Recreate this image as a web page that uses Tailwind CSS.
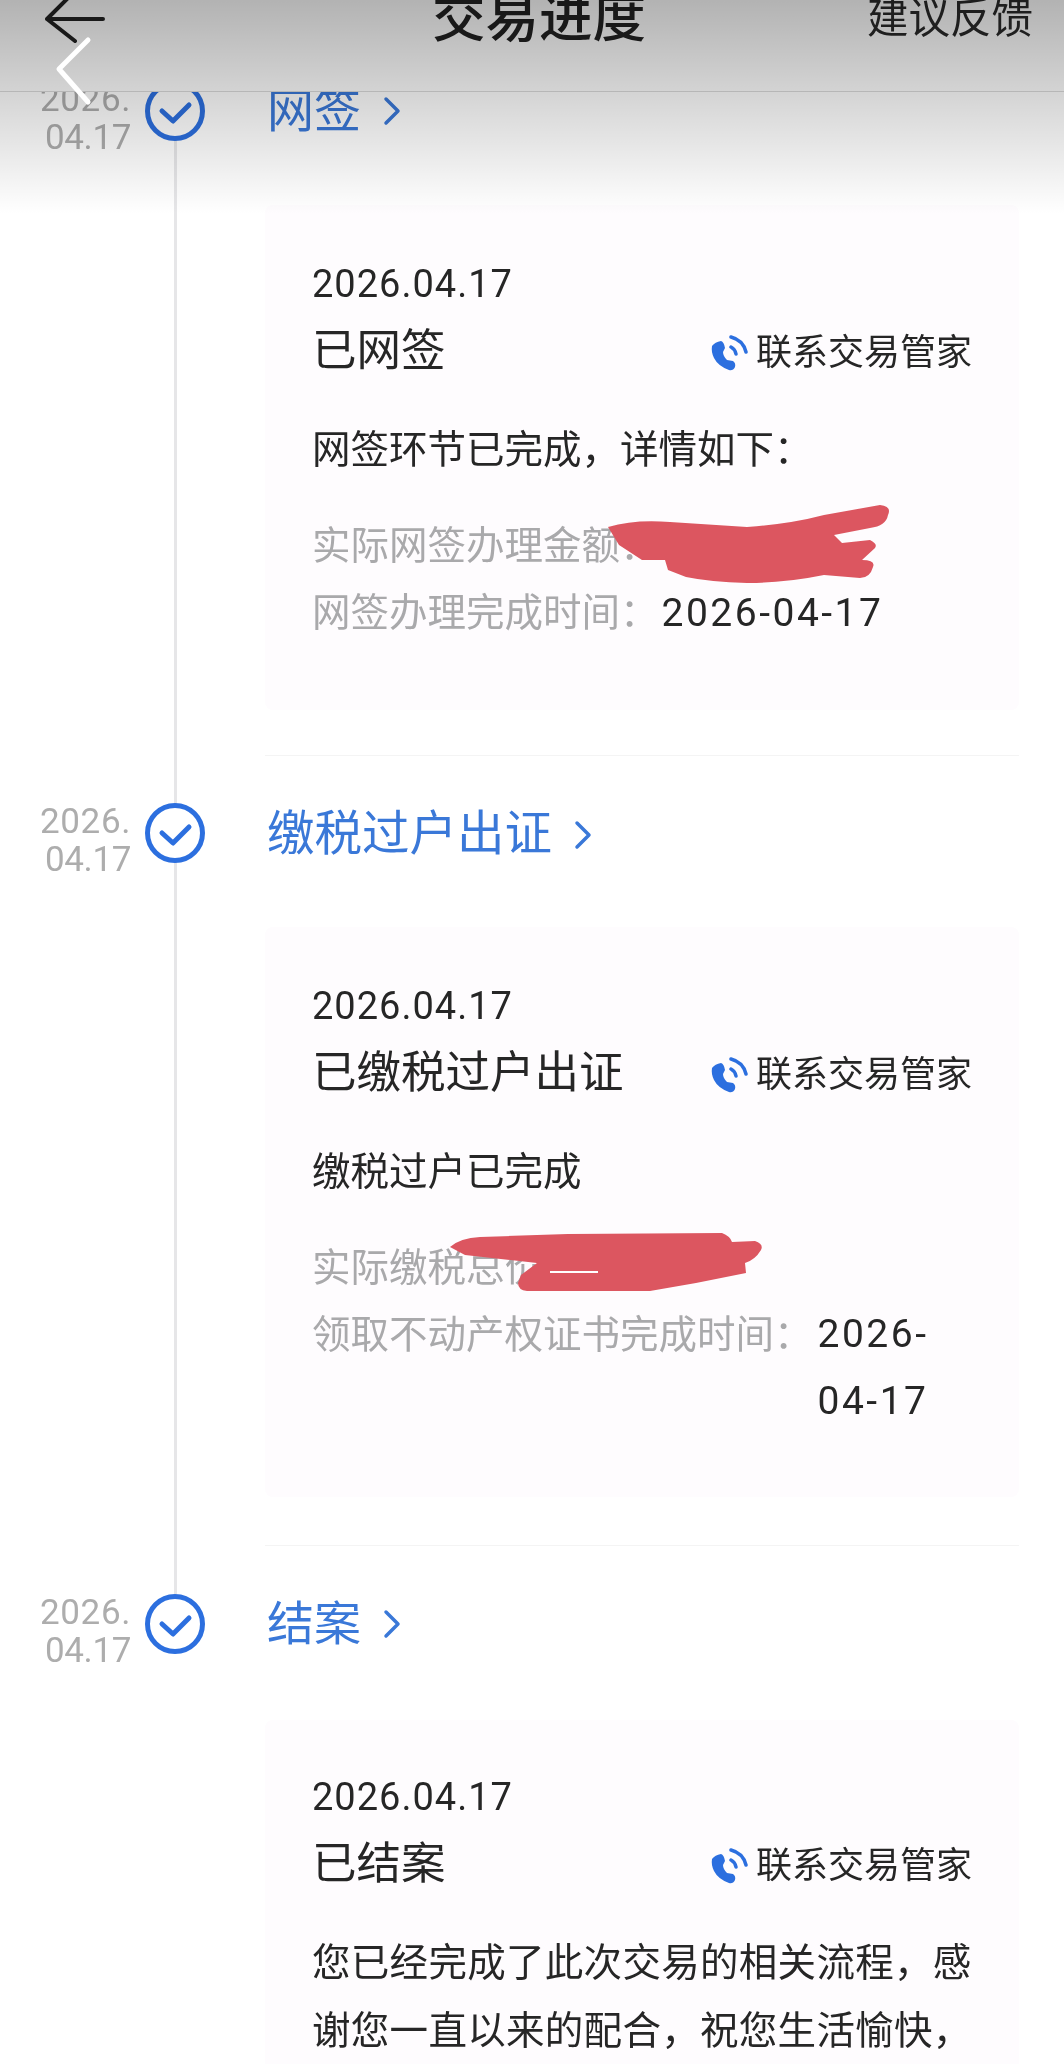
<!DOCTYPE html>
<html lang="zh-CN">
<head>
    <meta charset="UTF-8">
    <title>交易进度</title>
    <script src="https://cdn.jsdelivr.net/npm/@tailwindcss/browser@4"></script>
</head>
<body class="bg-white">
<div class="relative h-[2064px] w-[1064px] overflow-hidden bg-white pt-[81px] font-['Roboto','Noto_Sans_CJK_SC',sans-serif] text-[#262626] blur-[0.4px]">

    <!-- Timeline rail -->
    <div class="absolute left-[174px] top-[92px] h-[1502px] w-[3px] bg-[#e6e6e8]"></div>

    <!-- Step: 网签 -->
    <section class="relative">
        <div class="flex h-[60px] items-center">
            <div class="mt-[16px] w-[131px] text-right text-[35px] leading-[38px] text-[#adadad]"><span class="tracking-[0.6px]">2026.</span><br><span class="tracking-[-0.4px]">04.17</span></div>
            <svg class="ml-[14px] h-[60px] w-[60px]" viewBox="0 0 60 60" fill="#fff" stroke="#2c6fdf" stroke-width="5" stroke-linecap="round" stroke-linejoin="round"><circle cx="30" cy="30" r="27.5"/><path d="M17 30l11 10 16-16" fill="none"/></svg>
            <span class="ml-[62px] text-[47px] text-[#3a78d8]">网签</span>
            <svg class="ml-[22px] h-[30px] w-[18px]" viewBox="0 0 18 30" fill="none" stroke="#3a78d8" stroke-width="3.5" stroke-linecap="round" stroke-linejoin="round"><path d="M3 3l12 12L3 27"/></svg>
        </div>
        <div class="ml-[265px] mt-[64px] h-[505px] w-[754px] rounded-lg bg-[#fefcfe] px-[47px] pt-[57px]">
            <p class="text-[38px] leading-[44px] tracking-[1px]">2026.04.17</p>
            <div class="mt-[12px] flex h-[66px] items-center justify-between">
                <span class="text-[44.5px]">已网签</span>
                <span class="mt-[3px] flex items-center text-[36px]">
                    <svg class="mr-[8px] h-[38px] w-[38px]" viewBox="0 0 38 38"><path fill="#2c6fdf" d="M2 12Q5 8 11 7Q14 8 15 14L13 18Q13 22 17 26L23 27Q26 29 25 33Q23 37 19 36Q8 32 4 24Q1 18 2 12Z"/><path fill="none" stroke="#2c6fdf" stroke-width="3.5" stroke-linecap="round" d="M21 3Q33 6 36 18M21 13Q25 15 26 20"/></svg>
                    联系交易管家
                </span>
            </div>
            <p class="mt-[32px] text-[38.5px] leading-[67px]">网签环节已完成，详情如下：</p>
            <div class="mt-[29px] text-[38.5px] leading-[67px] text-[#a9a9ab]">
                <p>实际网签办理金额：</p>
                <p>网签办理完成时间：<span class="ml-[3px] text-[39px] tracking-[2.5px] text-[#262626]">2026-04-17</span></p>
            </div>
        </div>
        <div class="ml-[265px] mt-[45px] h-px w-[754px] bg-[#f4f4f4]"></div>
    </section>

    <!-- Step: 缴税过户出证 -->
    <section class="relative mt-[47px]">
        <div class="flex h-[60px] items-center">
            <div class="mt-[16px] w-[131px] text-right text-[35px] leading-[38px] text-[#adadad]"><span class="tracking-[0.6px]">2026.</span><br><span class="tracking-[-0.4px]">04.17</span></div>
            <svg class="ml-[14px] h-[60px] w-[60px]" viewBox="0 0 60 60" fill="#fff" stroke="#2c6fdf" stroke-width="5" stroke-linecap="round" stroke-linejoin="round"><circle cx="30" cy="30" r="27.5"/><path d="M17 30l11 10 16-16" fill="none"/></svg>
            <span class="ml-[62px] mt-[3px] text-[47.5px] text-[#3a78d8]">缴税过户出证</span>
            <svg class="ml-[22px] mt-[3px] h-[30px] w-[18px]" viewBox="0 0 18 30" fill="none" stroke="#3a78d8" stroke-width="3.5" stroke-linecap="round" stroke-linejoin="round"><path d="M3 3l12 12L3 27"/></svg>
        </div>
        <div class="ml-[265px] mt-[64px] h-[570px] w-[754px] rounded-lg bg-[#fefcfe] px-[47px] pt-[57px]">
            <p class="text-[38px] leading-[44px] tracking-[1px]">2026.04.17</p>
            <div class="mt-[12px] flex h-[66px] items-center justify-between">
                <span class="text-[44.5px]">已缴税过户出证</span>
                <span class="mt-[3px] flex items-center text-[36px]">
                    <svg class="mr-[8px] h-[38px] w-[38px]" viewBox="0 0 38 38"><path fill="#2c6fdf" d="M2 12Q5 8 11 7Q14 8 15 14L13 18Q13 22 17 26L23 27Q26 29 25 33Q23 37 19 36Q8 32 4 24Q1 18 2 12Z"/><path fill="none" stroke="#2c6fdf" stroke-width="3.5" stroke-linecap="round" d="M21 3Q33 6 36 18M21 13Q25 15 26 20"/></svg>
                    联系交易管家
                </span>
            </div>
            <p class="mt-[32px] text-[38.5px] leading-[67px]">缴税过户已完成</p>
            <div class="mt-[29px] text-[38.5px] leading-[67px] text-[#a9a9ab]">
                <p>实际缴税总价：</p>
                <div class="flex">
                    <span class="shrink-0">领取不动产权证书完成时间：</span>
                    <span class="ml-[5px] w-[130px] text-[39px] tracking-[2.5px] text-[#262626]">2026-<br>04-17</span>
                </div>
            </div>
        </div>
        <div class="ml-[265px] mt-[48px] h-px w-[754px] bg-[#f4f4f4]"></div>
    </section>

    <!-- Step: 结案 -->
    <section class="relative mt-[48px]">
        <div class="flex h-[60px] items-center">
            <div class="mt-[16px] w-[131px] text-right text-[35px] leading-[38px] text-[#adadad]"><span class="tracking-[0.6px]">2026.</span><br><span class="tracking-[-0.4px]">04.17</span></div>
            <svg class="ml-[14px] h-[60px] w-[60px]" viewBox="0 0 60 60" fill="#fff" stroke="#2c6fdf" stroke-width="5" stroke-linecap="round" stroke-linejoin="round"><circle cx="30" cy="30" r="27.5"/><path d="M17 30l11 10 16-16" fill="none"/></svg>
            <span class="ml-[62px] text-[47px] text-[#3a78d8]">结案</span>
            <svg class="ml-[22px] h-[30px] w-[18px]" viewBox="0 0 18 30" fill="none" stroke="#3a78d8" stroke-width="3.5" stroke-linecap="round" stroke-linejoin="round"><path d="M3 3l12 12L3 27"/></svg>
        </div>
        <div class="ml-[265px] mt-[66px] h-[400px] w-[754px] rounded-lg bg-[#fefcfe] px-[47px] pt-[55px]">
            <p class="text-[38px] leading-[44px] tracking-[1px]">2026.04.17</p>
            <div class="mt-[12px] flex h-[66px] items-center justify-between">
                <span class="text-[44.5px]">已结案</span>
                <span class="mt-[3px] flex items-center text-[36px]">
                    <svg class="mr-[8px] h-[38px] w-[38px]" viewBox="0 0 38 38"><path fill="#2c6fdf" d="M2 12Q5 8 11 7Q14 8 15 14L13 18Q13 22 17 26L23 27Q26 29 25 33Q23 37 19 36Q8 32 4 24Q1 18 2 12Z"/><path fill="none" stroke="#2c6fdf" stroke-width="3.5" stroke-linecap="round" d="M21 3Q33 6 36 18M21 13Q25 15 26 20"/></svg>
                    联系交易管家
                </span>
            </div>
            <p class="mt-[32px] whitespace-nowrap text-[38.5px] leading-[68px] tracking-[0.3px]">您已经完成了此次交易的相关流程，感<br>谢您一直以来的配合，祝您生活愉快，</p>
        </div>
    </section>

    <!-- Red redaction scribbles -->
    <svg class="absolute left-0 top-0 h-[2064px] w-[1064px]" viewBox="0 0 1064 2064" fill="#dc5660">
        <path d="M608 527Q635 519 670 522L747 527Q790 524 824 515L880 505Q892 506 888 515Q886 526 870 528L834 535L842 543L870 540Q878 544 875 548L862 560Q876 560 873 567Q870 578 860 578L824 575Q785 583 747 583Q710 582 686 577L668 570L665 560H642L619 545Z"/>
        <path d="M450 1247Q460 1238 480 1237L568 1234L722 1233Q730 1236 732 1242L755 1241Q764 1244 761 1250Q755 1260 745 1263L746 1273L696 1283L650 1291H527Q518 1290 518 1283L521 1275L537 1263L465 1255Z"/>
        <path d="M550 1272H598" stroke="#fff" stroke-width="2"/>
    </svg>

    <!-- Top bar -->
    <header class="absolute left-0 top-0 h-[92px] w-full border-b border-[#dcdcdc] bg-white">
        <div class="flex h-[38px] items-center pl-[45px] pr-[31px]">
            <svg class="h-[56px] w-[60px] shrink-0" viewBox="0 0 60 56" fill="none" stroke="#222" stroke-width="4" stroke-linecap="round" stroke-linejoin="round"><path d="M58 28H2M30 0L2 28l28 22"/></svg>
            <span class="ml-[327px] whitespace-nowrap text-[53.5px] font-medium text-[#222]">交易进度</span>
            <span class="ml-auto whitespace-nowrap text-[41.5px] text-[#2a2a2a]">建议反馈</span>
        </div>
    </header>

    <!-- Shade over the top of the picture -->
    <div class="absolute left-0 top-0 h-[214px] w-full bg-gradient-to-b from-black/30 to-transparent"></div>

    <!-- White back chevron -->
    <svg class="absolute left-[54px] top-[36px] h-[70px] w-[38px]" viewBox="0 0 38 70" fill="none" stroke="#fff" stroke-width="5" stroke-linecap="round" stroke-linejoin="round"><path d="M34 4L5 33l29 33"/></svg>
</div>
</body>
</html>
